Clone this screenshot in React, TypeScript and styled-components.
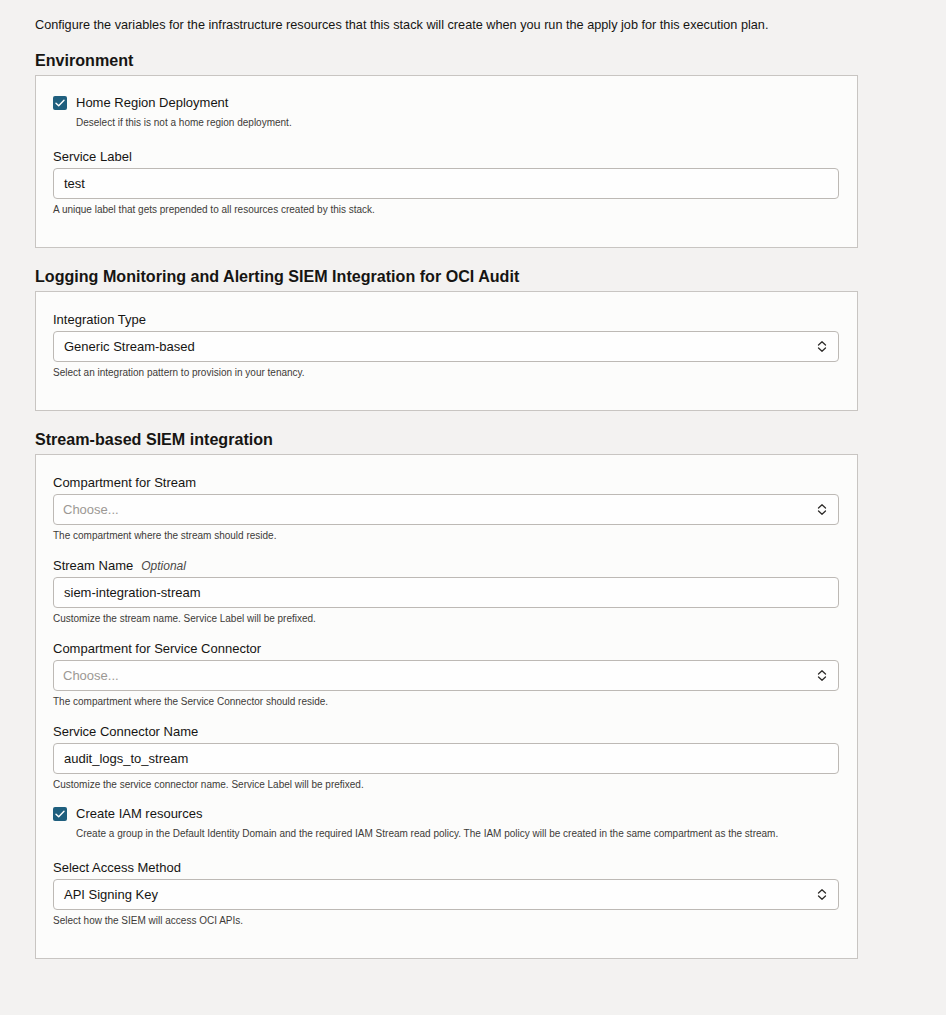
import React from "react";
import styled, { createGlobalStyle } from "styled-components";

const GlobalStyle = createGlobalStyle`
  html, body {
    margin: 0;
    padding: 0;
    background: #f3f2f1;
  }
  body {
    font-family: "Liberation Sans", Arial, Helvetica, sans-serif;
    color: #161513;
  }
`;

const Page = styled.div`
  padding: 16px 0 40px 35px;
  min-height: 1015px;
  box-sizing: border-box;
`;

const Intro = styled.p`
  margin: 0 0 16px;
  font-size: 12.7px;
  line-height: 18px;
`;

const Section = styled.section`
  width: 823px;
  margin-bottom: 18px;
`;

const SectionTitle = styled.h2`
  margin: 0 0 5px;
  font-size: 16.1px;
  line-height: 20px;
  font-weight: 700;
`;

const Panel = styled.div`
  box-sizing: border-box;
  background: #fcfcfb;
  border: 1px solid #c8c5c2;
  padding: 20px 18px 31px 17px;
  display: flex;
  flex-direction: column;
`;

const Field = styled.div<{ $last?: boolean }>`
  display: flex;
  flex-direction: column;
  margin-bottom: ${(p) => (p.$last ? "0" : "16px")};
`;

const Label = styled.label`
  font-size: 13px;
  line-height: 16px;
  margin-bottom: 3px;
  display: flex;
  gap: 8px;
`;

const Optional = styled.span`
  font-style: italic;
  color: #4a4845;
  font-size: 12px;
`;

const Control = styled.div`
  box-sizing: border-box;
  height: 31px;
  border: 1px solid #bdb9b5;
  border-radius: 4px;
  background: #fefefe;
  display: flex;
  align-items: center;
  justify-content: space-between;
  padding: 0 11px 0 9px;
  font-size: 13px;
`;

const Value = styled.span<{ $placeholder?: boolean }>`
  color: ${(p) => (p.$placeholder ? "#9c9894" : "#161513")};
  padding-left: ${(p) => (p.$placeholder ? "0" : "1px")};
`;

const Help = styled.div`
  font-size: 10px;
  line-height: 12px;
  color: #3d3b38;
  margin-top: 5px;
`;

const CheckGroup = styled.div`
  display: flex;
  flex-direction: column;
  margin-bottom: 20px;
`;

const CheckRow = styled.div`
  display: flex;
  align-items: center;
  gap: 9px;
  font-size: 13px;
  line-height: 14px;
`;

const Box = styled.span`
  width: 14px;
  height: 14px;
  border-radius: 2px;
  background: #1f5f7e;
  display: inline-flex;
  align-items: center;
  justify-content: center;
  flex: none;
`;

const CheckHelp = styled(Help)`
  margin-top: 7px;
  padding-left: 23px;
`;

const Chevrons = () => (
  <svg width="10" height="13" viewBox="0 0 10 13" fill="none">
    <path d="M1.5 5 L5 1.8 L8.5 5" stroke="#2f2d2b" strokeWidth="1.3" strokeLinecap="round" strokeLinejoin="round" />
    <path d="M1.5 8 L5 11.2 L8.5 8" stroke="#2f2d2b" strokeWidth="1.3" strokeLinecap="round" strokeLinejoin="round" />
  </svg>
);

const Check = ({ label, help }: { label: string; help: string }) => (
  <CheckGroup>
    <CheckRow>
      <Box>
        <svg width="10" height="8" viewBox="0 0 10 8" fill="none">
          <path d="M1 4.2 L3.7 6.8 L9 1.2" stroke="#ffffff" strokeWidth="1.4" strokeLinecap="round" strokeLinejoin="round" />
        </svg>
      </Box>
      <span>{label}</span>
    </CheckRow>
    <CheckHelp>{help}</CheckHelp>
  </CheckGroup>
);

type FieldProps = {
  label: string;
  value: string;
  help: string;
  select?: boolean;
  placeholder?: boolean;
  optional?: boolean;
  last?: boolean;
};

const FormField = ({ label, value, help, select, placeholder, optional, last }: FieldProps) => (
  <Field $last={last}>
    <Label>
      {label}
      {optional && <Optional>Optional</Optional>}
    </Label>
    <Control>
      <Value $placeholder={placeholder}>{value}</Value>
      {select && <Chevrons />}
    </Control>
    <Help>{help}</Help>
  </Field>
);

export default function App() {
  return (
    <>
      <GlobalStyle />
      <Page>
        <Intro>
          Configure the variables for the infrastructure resources that this stack will create when you run the apply job for this execution plan.
        </Intro>

        <Section>
          <SectionTitle>Environment</SectionTitle>
          <Panel>
            <Check label="Home Region Deployment" help="Deselect if this is not a home region deployment." />
            <FormField
              label="Service Label"
              value="test"
              help="A unique label that gets prepended to all resources created by this stack."
              last
            />
          </Panel>
        </Section>

        <Section>
          <SectionTitle>Logging Monitoring and Alerting SIEM Integration for OCI Audit</SectionTitle>
          <Panel>
            <FormField
              label="Integration Type"
              value="Generic Stream-based"
              select
              help="Select an integration pattern to provision in your tenancy."
              last
            />
          </Panel>
        </Section>

        <Section>
          <SectionTitle>Stream-based SIEM integration</SectionTitle>
          <Panel>
            <FormField
              label="Compartment for Stream"
              value="Choose..."
              placeholder
              select
              help="The compartment where the stream should reside."
            />
            <FormField
              label="Stream Name"
              optional
              value="siem-integration-stream"
              help="Customize the stream name. Service Label will be prefixed."
            />
            <FormField
              label="Compartment for Service Connector"
              value="Choose..."
              placeholder
              select
              help="The compartment where the Service Connector should reside."
            />
            <FormField
              label="Service Connector Name"
              value="audit_logs_to_stream"
              help="Customize the service connector name. Service Label will be prefixed."
            />
            <Check
              label="Create IAM resources"
              help="Create a group in the Default Identity Domain and the required IAM Stream read policy. The IAM policy will be created in the same compartment as the stream."
            />
            <FormField
              label="Select Access Method"
              value="API Signing Key"
              select
              help="Select how the SIEM will access OCI APIs."
              last
            />
          </Panel>
        </Section>
      </Page>
    </>
  );
}
